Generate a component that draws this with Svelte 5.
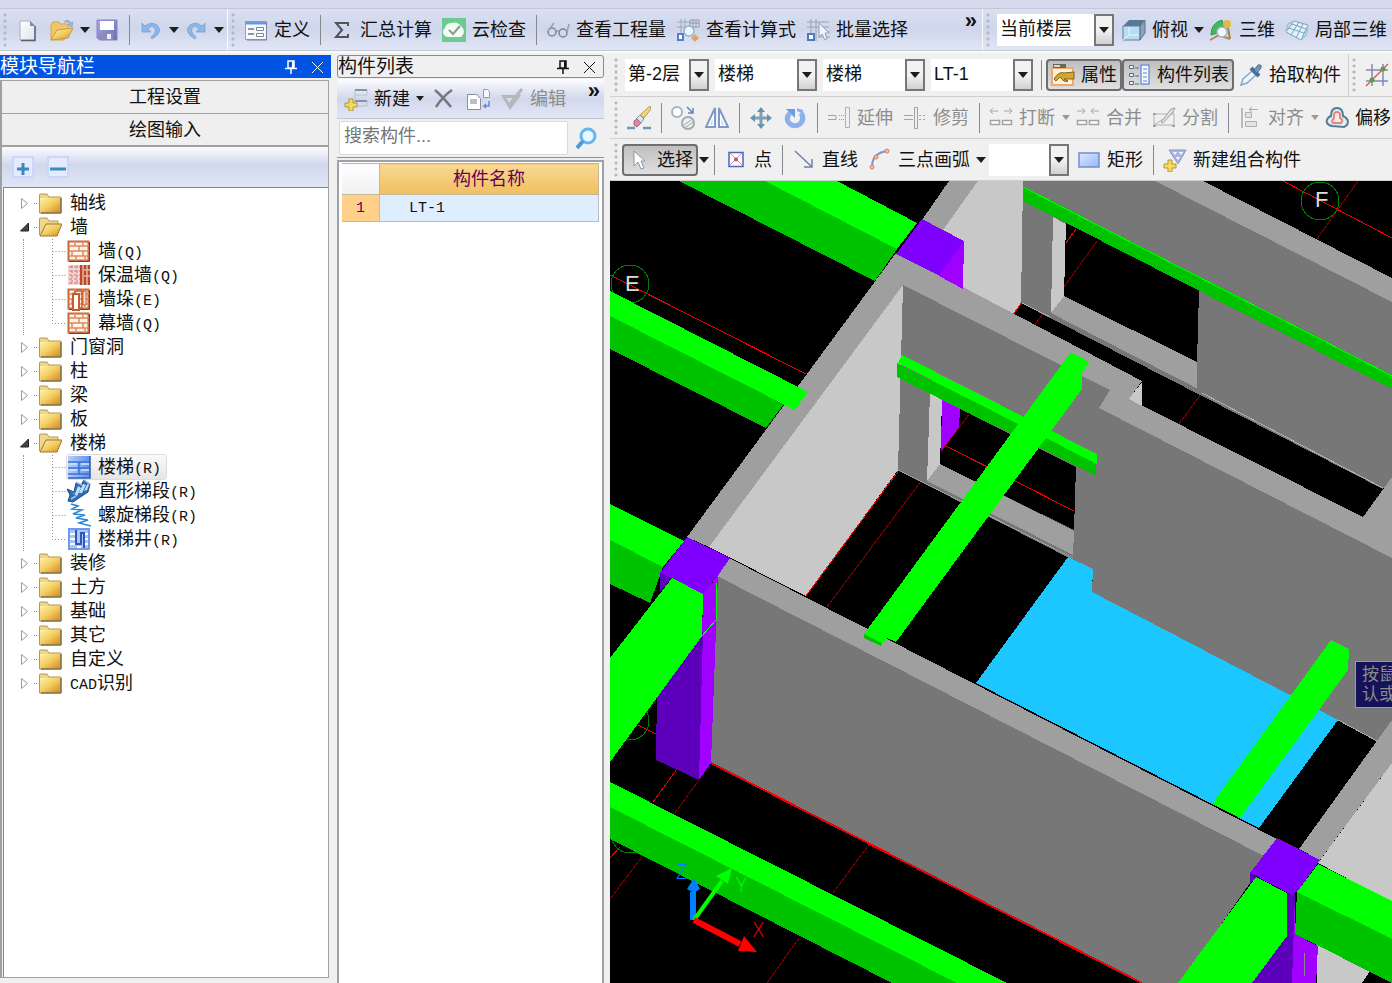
<script>
  let floor = $state('当前楼层');
  let search = $state('');
  let selected = $state('楼梯');

  let tree = $state([
    { label: '轴线' },
    { label: '墙', open: true, items: [
      { label: '墙', key: 'Q', icon: 'brick' },
      { label: '保温墙', key: 'Q', icon: 'insul' },
      { label: '墙垛', key: 'E', icon: 'pier' },
      { label: '幕墙', key: 'Q', icon: 'brick' }
    ] },
    { label: '门窗洞' },
    { label: '柱' },
    { label: '梁' },
    { label: '板' },
    { label: '楼梯', open: true, items: [
      { label: '楼梯', key: 'R', icon: 'stair' },
      { label: '直形梯段', key: 'R', icon: 'flight' },
      { label: '螺旋梯段', key: 'R', icon: 'spiral' },
      { label: '楼梯井', key: 'R', icon: 'well' }
    ] },
    { label: '装修' },
    { label: '土方' },
    { label: '基础' },
    { label: '其它' },
    { label: '自定义' },
    { label: '识别', prefix: 'CAD' }
  ]);

  const bricks = '<path d="M1.500 2.500h20v19h-20z" fill="#fff3e6" stroke="#c9683c" stroke-width="2"/><path d="M2 7h20M2 12h20M2 17h20M8 2v5M16 2v5M12 7v5M5 12v5M16 12v5M9 17v5M18 17v5" stroke="#dc8a60" stroke-width="1.500"/><path d="M22.500 3v19.500H2" stroke="#5b4a42"/>';

  const icons = {
    file: '<path d="M4 3h10l5 5v14H4z" fill="url(#paper)" stroke="#a7b0bf"/><path d="M19 8v14.500H5" stroke="#56606e" stroke-width="1.500"/><path d="M14 3v5h5z" fill="#7f8c9c"/>',
    open: '<path d="M1 7l2-3h6l1 2h8v4l-4 12H1z" fill="#f0c66c" stroke="#d8a544"/><path d="M1 22l6-10 16-2-5 10z" fill="url(#gold)" stroke="#c79c4a"/><path d="M14 4q4-4 7 1l2-1-1 5-4-2 2-1q-2-3-6-2z" fill="#9fb7cf" stroke="#7890aa" stroke-width=".5"/>',
    save: '<path d="M2 2h20v20H5l-3-2z" fill="url(#disk)" stroke="#8583c9"/><path d="M5 3h14v9H5z" fill="#fff"/><path d="M7 15h11v7H7z" fill="#8c8fa5"/><path d="M12 16h4v5h-4z" fill="#eef"/>',
    undo: '<path d="M3 5v9h9l-3-3q3-4 6-2 4 4-3 10l1 2q12-7 5-14-6-4-12 1z" fill="#8fb4ea" stroke="#6f9cdc" stroke-width=".7"/>',
    redo: '<path d="M21 5v9h-9l3-3q-3-4-6-2-4 4 3 10l-1 2q-12-7-5-14 6-4 12 1z" fill="#8cb8e6" stroke="#6b9dd8" stroke-width=".7"/>',
    define: '<path d="M1.500 3.500h21v18h-21z" fill="#f7f9ff" stroke="#93a2bb"/><path d="M1.500 3.500h21v3h-21z" fill="#6b97e2"/><path d="M4 11h6M4 16h6" stroke="#777" stroke-width="1.500"/><path d="M12.500 9.500h7v3h-7zM12.500 15.500h7v3h-7z" fill="#fff" stroke="#7b8798"/><path d="M22.500 5v17H3" stroke="#728095"/>',
    sigma: '<path d="M18 8V5H6l6 7-6 7h12v-3" stroke="#50555c" stroke-width="2"/>',
    cloud: '<path d="M0 0h24v24H0z" fill="#6ccb94"/><path d="M6 19a5 5 0 0 1-3-9q1-5 7-5 5-2 9 3 6 6 0 11z" fill="#f3fcf3"/><path d="M7 12l4 4 7-8" stroke="#8a9c92" stroke-width="2"/>',
    glasses: '<circle cx="6" cy="14" r="4" stroke="#7d858e" stroke-width="1.500"/><circle cx="17" cy="15" r="4" stroke="#7d858e" stroke-width="1.500"/><path d="M2 13L8 5M21 14l2-8M10 13h3" stroke="#9aa1a8" stroke-width="1.500"/>',
    formula: '<path d="M5 1v14M1 4h22M1 9h14M9 1v9" stroke="#a0a8b5"/><path d="M2 16h5v6H2z" fill="#fff" stroke="#567fc4" stroke-width="2"/><path d="M14 2h9v7h-9z" fill="#dfe3ea" stroke="#8c96a2"/><path d="M14 5h9M17 2v7M20 2v7" stroke="#8c96a2"/><circle cx="13" cy="13" r="5" fill="#edf7ff" stroke="#8fb5d5" stroke-width="1.500"/><path d="M19 16l4 4-4 4-4-4z" fill="#e0a566"/>',
    batch: '<path d="M5 1v14M10 1v22M1 4h22M1 9h22M12 14h12M12 19h12" stroke="#9aa1aa"/><path d="M2 16h6v6H2z" fill="#fff" stroke="#4f78c0" stroke-width="2"/><path d="M13 5v14l3-3 3 6 2-1-2-6h4z" fill="#eef4fa" stroke="#94a1b0"/>',
    cube: '<path d="M1 8l6-6h16l-5 6z" fill="#587895"/><path d="M1 8h17v14H1z" fill="#b9dcf5" stroke="#667f98"/><path d="M18 8l5-6v13l-5 7z" fill="#86a4bb" stroke="#5a7389"/><path d="M7 9v8h10M7 17l-6 5" stroke="#e8f6ff"/>',
    view3d: '<path d="M2 17Q2 5 13 2l3 11z" fill="#45b864" stroke="#319352"/><circle cx="18" cy="6" r="4" fill="#e2ba3d"/><path d="M19 10l2 11" stroke="#9a8450" stroke-width="2"/><path d="M1 22l9-5 11 4" stroke="#b8854f" stroke-width="2"/><circle cx="13" cy="14" r="5" fill="#f1f8fb" stroke="#a3b4be" stroke-width="1.500"/>',
    local3d: '<path d="M1 14L9 3l14 4-7 15z" fill="#e2f2fb" stroke="#7ba3bd"/><path d="M4 10l15 5M7 6l14 5M6 17L14 4M11 20l7-14" stroke="#7ba3bd"/><path d="M1 14l2-8 6-3M23 7l-2 10-5 5" stroke="#9bc0d4" stroke-width="1.500"/>',
    newItem: '<path d="M11 19V3h12v5H11M11 14h12v5H11" stroke="#b4c2d0"/><path d="M11 3h12M11 14h12" stroke="#8195a9" stroke-width="2"/><path d="M5 12h4v4h4v4H9v4H5v-4H1v-4h4z" fill="#f5db59" stroke="#ad953f"/>',
    cross: '<path d="M3 3q7 6 16 17M20 3Q11 9 4 20" stroke="#74787c" stroke-width="2.500"/>',
    copy: '<path d="M1.500 7.500h9l4 4v11h-13z" fill="#fff" stroke="#89909a"/><path d="M4 12h7v5H4z" fill="#b9bec7"/><path d="M17.500 2.500h4l2 2v6h-6z" fill="#f8f9ff" stroke="#9299a8"/><path d="M23 14v5h-5l2-2m-2 2 2 2" stroke="#6b8ae0" stroke-width="1.500"/>',
    check: '<path d="M1 8h20L10 23z" fill="#b4b7bb"/><path d="M6 11l4 6 5-6z" fill="#d5d9e4"/><path d="M10 17L22 2" stroke="#b4b7bb" stroke-width="3"/>',
    zoom: '<circle cx="13" cy="10" r="7" fill="#e5f7ff" stroke="#64b7ec" stroke-width="3"/><path d="M8 15l-6 7" stroke="#489bdf" stroke-width="4"/>',
    props: '<path d="M1 5h21v17H1z" fill="#fff1d6" stroke="#efa968" stroke-width="2"/><path d="M2 1h13v4H2z" fill="#6b655c"/><path d="M3 2h6v2H3z" fill="#d8d8d8"/><path d="M3 16q5-8 10-6l10-1v7H13l4 2q-4 2-8-4l-4 4z" fill="#d5a52c" stroke="#7e6326"/>',
    list: '<path d="M2.500 2.500h4v3h-4zM2.500 10.500h4v3h-4zM2.500 18.500h4v3h-4z" fill="#ecf2ff" stroke="#52688c"/><path d="M8 5h4M8 13h4M8 21h4" stroke="#52688c"/><path d="M14 2h8v19h-8z" fill="#f5f9ff" stroke="#7297d6" stroke-width="1.500"/><path d="M16 6h4M16 10h4M16 14h4M16 18h4" stroke="#5e88ce"/>',
    pick: '<path d="M2 22l2-6 9-8 4 4-9 8z" fill="#eaf7ff" stroke="#87aacb" stroke-width="1.500"/><path d="M12 5l8 8" stroke="#496f99" stroke-width="4"/><path d="M15 7l4-5q4-1 3 3l-4 5z" fill="#6b97c2" stroke="#496f99"/>',
    axis: '<path d="M7 1v22M18 1v22M1 7h22M1 18h22" stroke="#8089b5" stroke-width="1.500"/><path d="M1 23L23 1" stroke="#e05656" stroke-width="1.500"/><circle cx="7" cy="17" r="2.500" fill="#5d9b48"/><circle cx="18" cy="6" r="2.500" fill="#5d9b48"/>',
    eraser: '<path d="M0 22h8M16 22h8" stroke="#7695ae" stroke-width="2.500"/><path d="M13 9L23 0l1 3-7 9z" fill="#efd583" stroke="#b79b4d"/><path d="M9 13l4-4 4 4-4 5z" fill="#d8e4ed" stroke="#8799a6"/><path d="M7 15l3-2 4 4-4 4-3-2z" fill="#e282a2" stroke="#9b7186"/>',
    dup: '<circle cx="6" cy="6" r="5" fill="#fff" stroke="#a3b3c2" stroke-width="2"/><circle cx="17" cy="17" r="6" fill="#edf0f2" stroke="#a4a9ad" stroke-width="2"/><path d="M13 19l7-5M15 21l7-5" stroke="#9da3aa"/><path d="M16 1l6 6M22 2v5h-5" stroke="#6387ad" stroke-width="1.500"/>',
    mirror: '<path d="M10 2v19H1zM14 2v19h9z" fill="#fff" stroke="#7f98c8" stroke-width="2"/><path d="M7.500 12v7H5zM16.500 12v7H19z" fill="#c9daf5"/>',
    move: '<path d="M12 4v16M4 12h16" stroke="#7f9fb5" stroke-width="3"/><path d="M12 1l4 5H8zM12 23l4-5H8zM1 12l5-4v8zM23 12l-5-4v8z" fill="#6c90a9"/>',
    rotate: '<path d="M7 7q-5 5-1 10 5 5 11 1 5-5 1-11" stroke="#8cb0ea" stroke-width="5"/><path d="M3 3h9v9l-3-3z" fill="#6f9be2"/><path d="M14 2l6 2v4l-6-3z" fill="#8cb0ea"/>',
    extend: '<path d="M1 9.500h8v4H1M11 9.500h6M11 13.500h6" stroke="#a0a0a0"/><path d="M11 9.500h6M11 13.500h6" stroke="#f0f0f0" stroke-dasharray="1 1"/><path d="M18.500 1.500h4v20h-4z" stroke="#b0b0b0"/>',
    trim: '<path d="M1 9.500h9M1 13.500h9" stroke="#a2a2a2"/><path d="M16 9.500h8M16 13.500h8" stroke="#a2a2a2" stroke-dasharray="2 2"/><path d="M11.500 1.500h3v21h-3z" fill="#eee" stroke="#a2a2a2"/>',
    cut: '<path d="M1 5h8M4 2L1 5l3 3M15 5h8M20 2l3 3-3 3" stroke="#a5a5a5"/><path d="M1.500 14.500h9v4h-9zM13.500 14.500h9v4h-9z" fill="#fff" stroke="#a2a2a2" stroke-width="1.500"/>',
    join: '<path d="M1 5h8M6 2l3 3-3 3M15 5h8M18 2l-3 3 3 3" stroke="#a5a5a5"/><path d="M1.500 14.500h9v4h-9zM13.500 14.500h9v4h-9z" fill="#fff" stroke="#a2a2a2" stroke-width="1.500"/>',
    divide: '<path d="M2 8h20v11H2zM2 19L22 6" stroke="#b0b0b0"/><path d="M9 16L19 3l4-1-2 4-10 11z" fill="#ddd" stroke="#a2a2a2"/><path d="M1 20h3M20 20h3M1 8h3" stroke="#a2a2a2" stroke-width="2"/>',
    align: '<path d="M4 2v20" stroke="#aaa" stroke-width="1.500"/><path d="M7.500 6.500h6v5h-6zM7.500 15.500h11v5h-11z" fill="#e2e2e2" stroke="#b0b0b0"/><path d="M11 3.500h9M14 1l-3 2.500L14 6" stroke="#aaa"/>',
    offset: '<path d="M7 20q-8-2-4-8 1-1 3-2 0-8 6-8t6 8q7 3 4 9l-3 2z" fill="#e1edf3" stroke="#537b94" stroke-width="2"/><path d="M8 17q-2-2 1-5-1-6 3-6t3 6q4 2 1 5z" fill="#fbe9e7" stroke="#e28580" stroke-width="2"/>',
    pointer: '<path d="M7 3v15l4-4 3 7 3-1-3-7h4z" fill="#fff" stroke="#8799ad"/>',
    dot: '<path d="M5 4.500h14v14H5z" fill="#fff" stroke="#5a5fb0" stroke-width="1.500"/><path d="M6 5l12 12M18 5L6 17" stroke="#8fa0d0"/><circle cx="12" cy="11.500" r="2" fill="#e0475a"/>',
    line: '<path d="M3 3l16 15M20 11v8h-8" stroke="#6a83ab" stroke-width="1.500"/>',
    arc: '<path d="M4 19Q4 5 19 3" stroke="#7999c6" stroke-width="2"/><circle cx="4" cy="19" r="2" fill="#f6baa6" stroke="#db7866"/><circle cx="8" cy="9" r="2" fill="#f6baa6" stroke="#db7866"/><circle cx="19" cy="3" r="2" fill="#f6baa6" stroke="#db7866"/>',
    rect: '<path d="M2 5h20v14H2z" fill="url(#blue)" stroke="#6f8fd0" stroke-width="1.500"/>',
    group: '<path d="M6 2h17l-8 14z" fill="#a9b6dd" stroke="#8395c4"/><path d="M10 4h4l-2 3zM16 4h4l-2 3zM13 9h4l-2 3z" fill="#fff"/><path d="M5 12h4v4h4v4H9v4H5v-4H1v-4h4z" fill="#f5db59" stroke="#ad953f"/>',
    folder: '<path d="M1.500 6V4q0-1 1-1H9l2 3h12v16H1.500z" fill="#ecd58c" stroke="#b89a57"/><path d="M2 7h20v14H2z" fill="url(#gold)"/><path d="M23 7v15H3" stroke="#5c4a26"/>',
    folderOpen: '<path d="M1.500 20V4q0-1 1-1H9l2 3h9v4" fill="#f0d78c" stroke="#b89a57"/><path d="M2 21L8 9h16l-5 12z" fill="url(#gold)" stroke="#9c7632"/>',
    brick: bricks,
    insul: '<path d="M1 2h14v20H1z" fill="#f2d3cd"/><path d="M2 4h11M2 8h11M2 12h11M2 16h11M2 20h11M5 2v20M10 2v20" stroke="#c97883" stroke-dasharray="3 2"/><path d="M13 2h10v20H13z" fill="#b44a31"/><path d="M16 2v20M20 2v20M17 7h6M17 13h6" stroke="#f0b29c" stroke-width="1.500"/>',
    pier: bricks + '<path d="M6 7h6v16H6z" fill="#fff" stroke="#c85a2d" stroke-width="2"/><path d="M6 7l3-3h6v16l-3 3" stroke="#c85a2d" stroke-width="1.500"/><path d="M16 4h3v14h-3z" fill="#ffe2cc" stroke="#c85a2d"/>',
    stair: '<path d="M1 1h22v22H1z" fill="url(#stairBlue)"/><path d="M1 7h22M1 13h22M1 19h22M12 7v12" stroke="#3d6fd8" stroke-width="1.500"/><path d="M3 9h7M14 9h8M3 15h7M14 15h8" stroke="#d7e6ff" stroke-width="1.500"/><path d="M23 1v22H1" stroke="#315dae" stroke-width="1.500"/>',
    flight: '<path d="M0 10l7 3 2-9 5 2 3-5 6 4-2 8L6 23l-5-1 2-6z" fill="#2f6cb0" stroke="#174f93"/><path d="M3 12l5 3 3-8 3 2-4 8zM12 14l4-9 3 1-4 8zM17 12l4-8 1 2-2 5z" fill="#c3dff8"/><path d="M4 20l5-3M9 3l6 3M17 1l6 4" stroke="#9cc6ef" stroke-width="1.500"/>',
    spiral: '<path d="M4 1l7 2-6 3 10 1-9 4 12 1-9 3 12 2-9 3 12 3" stroke="#2a86d8" stroke-width="1.500"/>',
    well: '<path d="M2 2h20v20H2z" fill="#a9c6fb" stroke="#6f9af0" stroke-width="2"/><path d="M3 7h5M3 12h5M3 17h5M17 7h4M17 12h4M17 17h4M10 20h4" stroke="#fff" stroke-width="2"/><path d="M9 3v14h5V6h3v15" stroke="#3457b5" stroke-width="2"/>'
  };
</script>

{#snippet icon(name)}
  <svg class="icon" viewBox="0 0 24 24" fill="none" aria-hidden="true">{@html icons[name]}</svg>
{/snippet}

{#snippet tool(name, label, cls = '')}
  <button class="tool {cls}" aria-label={label || name} disabled={cls === 'off'}>
    {@render icon(name)}{#if label}<span>{label}</span>{/if}
  </button>
{/snippet}

{#snippet drop(cls = '')}
  <button class="drop {cls}" aria-label="更多"><i class="tri"></i></button>
{/snippet}

{#snippet combo(label, value, size)}
  <span class="combo {size}">
    <select aria-label={label}><option>{value}</option></select>
    <i class="comboBtn"><i class="tri"></i></i>
  </span>
{/snippet}

{#snippet windowBtns()}
  <button class="winBtn" aria-label="固定">
    <svg viewBox="0 0 14 14" width="14" height="14" fill="none" stroke="currentColor"><path d="M4 1h6v7H4zM1 8.500h12M7 9v5" stroke-width="1.500" /><path d="M9 1v7" stroke-width="2" /></svg>
  </button>
  <button class="winBtn" aria-label="关闭">
    <svg viewBox="0 0 14 14" width="14" height="14" fill="none" stroke="currentColor"><path d="M1 2l11 11M12 2L1 13" /></svg>
  </button>
{/snippet}

<svg class="defs" aria-hidden="true">
  <defs>
    <linearGradient id="gold" x2="1" y2="1"><stop stop-color="#fff2a8" /><stop offset=".5" stop-color="#f3cd62" /><stop offset="1" stop-color="#d58b1c" /></linearGradient>
    <linearGradient id="paper" x2="1" y2="1"><stop stop-color="#fff" /><stop offset="1" stop-color="#dbe4ee" /></linearGradient>
    <linearGradient id="disk" x2="1" y2="1"><stop stop-color="#a9a6e8" /><stop offset="1" stop-color="#6b6bb8" /></linearGradient>
    <linearGradient id="blue" x2="1" y2="1"><stop stop-color="#dceaff" /><stop offset="1" stop-color="#94b7f7" /></linearGradient>
    <linearGradient id="stairBlue" x2="1"><stop stop-color="#b4d0ff" /><stop offset="1" stop-color="#5f90ee" /></linearGradient>
  </defs>
</svg>

<div class="app">
  <div class="menuStrip"></div>
  <header class="mainBar">
    <div class="group">
      <i class="grip"></i>
      {@render tool('file', '')}
      {@render tool('open', '')}
      {@render drop()}
      {@render tool('save', '')}
      <i class="sep"></i>
      {@render tool('undo', '')}
      {@render drop()}
      {@render tool('redo', '')}
      {@render drop()}
    </div>
    <div class="group grow">
      <i class="grip"></i>
      {@render tool('define', '定义')}
      <i class="sep"></i>
      {@render tool('sigma', '汇总计算')}
      {@render tool('cloud', '云检查')}
      <i class="sep"></i>
      {@render tool('glasses', '查看工程量')}
      {@render tool('formula', '查看计算式')}
      {@render tool('batch', '批量选择')}
      <button class="more" aria-label="更多工具">»</button>
    </div>
    <div class="group">
      <i class="grip"></i>
      <span class="combo w117">
        <select aria-label="楼层范围" bind:value={floor}><option>当前楼层</option></select>
        <i class="comboBtn"><i class="tri"></i></i>
      </span>
      {@render tool('cube', '俯视')}
      {@render drop()}
      {@render tool('view3d', '三维')}
      {@render tool('local3d', '局部三维')}
    </div>
  </header>

  <div class="body">
    <aside class="nav">
      <div class="title active"><span>模块导航栏</span>{@render windowBtns()}</div>
      <div class="navBody">
        <button class="section">工程设置</button>
        <button class="section">绘图输入</button>
        <div class="treeBar">
          <button class="mini" aria-label="全部展开"><svg viewBox="0 0 22 22" width="22" height="22"><path d="M5 13h12M11 7v12" stroke="#388abf" stroke-width="3" /></svg></button>
          <button class="mini" aria-label="全部折叠"><svg viewBox="0 0 22 22" width="22" height="22"><path d="M3 13h16" stroke="#388abf" stroke-width="3" /></svg></button>
        </div>
        <ul class="tree">
          {#each tree as node}
            <li>
              <button class="node" onclick={() => { if (node.items) node.open = !node.open; }}>
                <svg class="twist" viewBox="0 0 19 24">
                  {#if node.open}
                    <path d="M9.500 8v8H1.500z" fill="#444" stroke="#222" />
                  {:else}
                    <path d="M2.500 7.500v10l6-5z" fill="#fff" stroke="#999" />
                  {/if}
                  <path d="M15 12.500h4" stroke="#888" stroke-dasharray="1 1" />
                </svg>
                {@render icon(node.open ? 'folderOpen' : 'folder')}
                <span class="text">{#if node.prefix}<span class="mono">{node.prefix}</span>{/if}{node.label}</span>
              </button>
              {#if node.open}
                <ul class="children">
                  {#each node.items as item, i}
                    <li>
                      <svg class="stub" viewBox="0 0 15 24"><path d={i === node.items.length - 1 ? 'M.5 0V12.5H15' : 'M.5 0V24M.5 12.5H15'} fill="none" stroke="#888" stroke-dasharray="1 2" /></svg>
                      <button class="leaf" class:selected={selected === item.label} onclick={() => (selected = item.label)}>
                        {@render icon(item.icon)}
                        <span>{item.label}<span class="mono">({item.key})</span></span>
                      </button>
                    </li>
                  {/each}
                </ul>
              {/if}
            </li>
          {/each}
        </ul>
      </div>
    </aside>

    <aside class="list">
      <div class="title"><span>构件列表</span>{@render windowBtns()}</div>
      <div class="listBar">
        <button class="tool tight">{@render icon('newItem')}<span>新建</span></button>
        {@render drop('wide')}
        {@render tool('cross', '')}
        {@render tool('copy', '')}
        {@render tool('check', '编辑', 'off')}
        <button class="more" aria-label="更多">»</button>
      </div>
      <div class="search">
        <input type="text" aria-label="搜索构件" placeholder="搜索构件..." bind:value={search} />
        <button class="tool" aria-label="搜索">{@render icon('zoom')}</button>
      </div>
      <div class="gridBox">
        <table>
          <thead><tr><th class="num" aria-label="序号"></th><th>构件名称</th></tr></thead>
          <tbody><tr><td class="num mono">1</td><td class="mono">LT-1</td></tr></tbody>
        </table>
      </div>
    </aside>

    <main class="work">
      <div class="bar">
        <i class="grip"></i>
        {@render combo('楼层', '第-2层', 'w84')}
        {@render combo('构件类别', '楼梯', 'w102')}
        {@render combo('构件类型', '楼梯', 'w102')}
        {@render combo('构件', 'LT-1', 'w102')}
        <i class="sep"></i>
        {@render tool('props', '属性', 'pressed')}
        {@render tool('list', '构件列表', 'pressed')}
        {@render tool('pick', '拾取构件')}
        <i class="edge"></i>
        <i class="grip"></i>
        {@render tool('axis', '')}
      </div>
      <div class="bar">
        <i class="grip"></i>
        {@render tool('eraser', '')}
        <i class="sep"></i>
        {@render tool('dup', '')}
        {@render tool('mirror', '')}
        <i class="sep"></i>
        {@render tool('move', '')}
        {@render tool('rotate', '')}
        <i class="sep"></i>
        {@render tool('extend', '延伸', 'off')}
        {@render tool('trim', '修剪', 'off')}
        <i class="sep"></i>
        {@render tool('cut', '打断', 'off')}
        {@render drop('dim')}
        {@render tool('join', '合并', 'off')}
        {@render tool('divide', '分割', 'off')}
        <i class="sep"></i>
        {@render tool('align', '对齐', 'off')}
        {@render drop('dim')}
        {@render tool('offset', '偏移')}
      </div>
      <div class="bar">
        <i class="grip"></i>
        {@render tool('pointer', '选择', 'pressed')}
        {@render drop()}
        <i class="sep"></i>
        {@render tool('dot', '点')}
        <i class="sep"></i>
        {@render tool('line', '直线')}
        {@render tool('arc', '三点画弧')}
        {@render drop()}
        {@render combo('弧方式', '', 'w80')}
        {@render tool('rect', '矩形')}
        <i class="sep"></i>
        {@render tool('group', '新建组合构件')}
      </div>

      <svg class="scene" viewBox="610 181 782 802" preserveAspectRatio="xMinYMin slice" shape-rendering="crispEdges" fill="none">
        <!-- axis grid -->
        <g stroke="#f00000">
          <path d="M610 275L806 374M1283 181L1392 238M677 769L653 802M620 847L610 858M638 725L656 734" />
        </g>
        <g stroke="#800000">
          <path d="M1358 181L1317 239M921 481L827 607M1043 314L1034 326M1201 394L1179 424M699 780L675 813M870 843L833 893M799 938L767 983M642 857L610 899" />
        </g>
        <g stroke="#007c00">
          <circle cx="630" cy="284" r="19" /><circle cx="1320" cy="201" r="19" /><circle cx="630" cy="721" r="19" /><circle cx="630" cy="834" r="19" />
        </g>

        <!-- left beams -->
        <path d="M679 181H765L897 249L875 281z" fill="#00c300" />
        <path d="M765 181H837L917 223L897 249z" fill="#0f0" />
        <path d="M610 316L784 404L766 428L610 349zM610 540L663 567L650 603L610 584z" fill="#00c300" />
        <path d="M610 504L684 541L663 567L610 540z" fill="#0f0" />

        <!-- far room -->
        <path d="M949 181H978L943 230L922 220z" fill="#9f9f9f" />
        <path d="M978 181H1024L1021 303L1013 315L963 290V241L943 230z" fill="#c8c8c8" />
        <path d="M1023 181H1155L1392 302V478L1383 489L1021 303z" fill="#777" />
        <path d="M1155 181H1203L1392 278V302z" fill="#9f9f9f" />
        <path d="M1053 217L1066 224L1064 296L1051 313z" fill="#c8c8c8" />
        <path d="M1066 222L1199 290L1197 362L1064 296z" fill="#000" />
        <path d="M1064 296L1197 362V389L1051 313z" fill="#9f9f9f" />
        <path d="M1050 314L1202 392" stroke="#777" stroke-width="2" />
        <path d="M1202 393L1383 488M1022 303L1050 317" stroke="#b0b0b0" />
        <path d="M1066 243L1076 229M1013 315L1022 302" stroke="#f00000" />
        <path d="M1064 287L1097 241" stroke="#800000" />
        <path d="M1023 186L1392 375V389L1023 201z" fill="#00c300" />
        <path d="M1023 187L1392 376" stroke="#0f0" />

        <!-- stair room, back walls -->
        <path d="M903 285L898 470L806 596L709 547z" fill="#c8c8c8" />
        <path d="M806 596L899 470" stroke="#f00000" />
        <path d="M896 253L910 270L903 285L709 547L687 537z" fill="#9f9f9f" />
        <path d="M903 285L1110 390L1099 408L1392 558V722L1377 741L1092 592L1093 570L1073 560L898 470z" fill="#777" />
        <path d="M896 253L940 275L1142 381L1129 399L1363 517L1392 477V558L1099 408L1110 390L903 285z" fill="#9f9f9f" />
        <path d="M1142 382V406L1129 399z" fill="#c8c8c8" />
        <path d="M930 393L942 400L940 464L927 481z" fill="#c8c8c8" />
        <path d="M942 400L1076 467L1074 530L940 464z" fill="#000" />
        <path d="M942 400L960 409L959 428L941 452z" fill="#a000ff" />
        <path d="M941 452L970 413" stroke="#800000" />
        <path d="M946 446L1074 511" stroke="#f00000" />
        <path d="M940 464L1074 531L1073 555L927 481z" fill="#9f9f9f" />
        <path d="M898 470L1073 558" stroke="#9f9f9f" />

        <!-- landing -->
        <path d="M1068 557L1093 569L1092 592L1338 720L1259 828L976 683z" fill="#1cc6ff" />
        <path d="M1338 720L1377 741" stroke="#aaa" />

        <path d="M610 291L808 392L795 410L610 316z" fill="#0f0" />
        <path d="M897 363L1096 463V476L897 377z" fill="#00c300" />
        <path d="M902 355L1097 454V464L898 363z" fill="#0f0" />

        <!-- front wall -->
        <path d="M729 558L1277 839L1264 857L717 576z" fill="#9f9f9f" />
        <path d="M717 576L1264 856L1250 873V883L1180 983H1142L711 763z" fill="#777" />
        <path d="M711 763L1142 983" stroke="#f00000" stroke-width="2" />
        <path d="M1071 352L1089 362L1082 373V389L896 642L887 638L882 643L864 634z" fill="#0f0" />
        <path d="M864 634L882 643L881 646L864 638z" fill="#00c300" />
        <path d="M1331 640L1349 649L1348 670L1240 818L1212 804z" fill="#0f0" />

        <!-- right wall and beams -->
        <path d="M1392 720L1299 849L1320 860L1392 763z" fill="#9f9f9f" />
        <path d="M1392 763L1318 863L1392 902zM1317 945L1370 971L1362 983H1317z" fill="#c8c8c8" />
        <path d="M1297 892L1392 939V983L1295 934z" fill="#00c300" />
        <path d="M1318 864L1392 901V939L1297 892z" fill="#0f0" />

        <!-- columns -->
        <path d="M922 219L964 241L940 276L896 254zM687 537L730 558L717 577L703 594L660 573zM1277 838L1320 860L1297 892L1290 894L1250 873z" fill="#8000ff" />
        <path d="M964 241L963 289L939 276zM703 594L718 576L711 763L699 780zM1295 893V934L1318 946L1316 983H1290z" fill="#a000ff" />
        <path d="M660 573L672 578L660 592zM703 630L699 780L656 760L657 690zM1250 873L1257 877L1250 883zM1286 893H1295L1292 983H1252L1286 936z" fill="#5c00bb" />
        <path d="M1304 953V976" stroke="#888" />
        <path d="M672 578L703 594L702 636L610 762V658z" fill="#0f0" />
        <path d="M1256 877L1287 893V936L1252 983H1178z" fill="#0f0" />
        <path d="M717 583L716 620L702 636" stroke="#0f0" />

        <path d="M610 807L960 983H892L610 839z" fill="#00c300" />
        <path d="M610 782L1007 983H957L610 807z" fill="#0f0" />

        <!-- coordinate axes -->
        <g shape-rendering="auto">
          <path d="M693 920V892" stroke="#0080ff" stroke-width="6" />
          <path d="M694 878L700 889L694 893L687 889z" fill="#0080ff" />
          <path d="M694 920L722 881" stroke="#0f0" stroke-width="4" />
          <path d="M732 868L716 876L728 884z" fill="#0f0" />
          <path d="M694 920L740 944" stroke="#f00" stroke-width="6" />
          <path d="M744 936L757 952L738 951z" fill="#f00" />
        </g>
        <g class="axisText">
          <text x="676" y="879" fill="#0080ff">Z</text>
          <text x="736" y="892" fill="#0f0">Y</text>
          <text x="753" y="937" fill="#f00">X</text>
        </g>
        <g class="gridText" fill="#ddd">
          <text x="625" y="291">E</text>
          <text x="1315" y="207">F</text>
        </g>

        <path d="M1355 661H1400V707H1355z" fill="#151259" stroke="#9a9aa8" />
        <g class="hintText" fill="#8b8b8b">
          <text x="1362" y="680">按鼠</text>
          <text x="1362" y="700">认或</text>
        </g>
      </svg>
    </main>
  </div>
</div>

<style>
:global(body) {
  background-color: #f0f0f0;
}
.app {
  display: flex;
  flex-direction: column;
  height: 100vh;
  overflow: hidden;
  background-color: #f0f0f0;
  color: #111;
  font-family: "Liberation Sans", "Noto Sans CJK SC", sans-serif;
  font-size: 18px;
  line-height: 24px;
}
.defs {
  position: absolute;
  width: 0;
  height: 0;
}
button, select, input {
  font: inherit;
  color: inherit;
  border: 0;
  padding: 0;
  background: none;
  border-radius: 0;
}
ul {
  list-style: none;
  margin: 0;
  padding: 0;
}
.icon {
  width: 24px;
  height: 24px;
  flex: none;
}
.menuStrip {
  height: 8px;
  flex: none;
  background-color: #d5daed;
  border-bottom: 1px solid #c3c8d8;
}
.mainBar {
  display: flex;
  flex: none;
  height: 42px;
  border-bottom: 2px solid #fafafa;
}
.group {
  display: flex;
  align-items: center;
  background: linear-gradient(#dae0f2, #cfd6eb 50%, #e1e6f6);
  border-bottom: 1px solid #c4c9d6;
}
.group:first-child {
  padding-right: 3px;
}
.group + .group {
  border-left: 1px solid #fafafa;
}
.grow {
  flex: 1;
  min-width: 0;
}
.grip {
  flex: none;
  width: 4px;
  height: 34px;
  margin: 0 4px 0 3px;
  background: radial-gradient(circle at 2px 2px, #b4b8c4 1px, transparent 2px) 0 0 / 4px 6px;
}
.sep {
  flex: none;
  width: 1px;
  height: 30px;
  margin: 0 4px 0 5px;
  background-color: #85888f;
}
.tool {
  display: flex;
  flex: none;
  align-items: center;
  gap: 6px;
  height: 32px;
  padding: 0 5px;
  box-sizing: border-box;
  white-space: nowrap;
}
.off {
  color: #8d8d8d;
}
.pressed {
  border-radius: 4px;
  background: linear-gradient(#bdbdbd, #e2e2e2);
  box-shadow: inset 0 0 0 2px #6f6f6f;
}
.drop {
  flex: none;
  display: flex;
  align-items: center;
  justify-content: center;
  width: 11px;
  height: 32px;
}
.wide {
  width: 14px;
}
.tri {
  border: 5px solid transparent;
  border-top: 6px solid #1d1d1d;
  border-bottom: 0;
}
.dim .tri, .listBar .tri {
  border-width: 5px 4px 0;
}
.dim .tri {
  border-top-color: #999;
}
.more {
  align-self: flex-start;
  margin-left: auto;
  padding: 0 5px;
  font-family: "Liberation Sans", sans-serif;
  font-weight: bold;
  font-size: 22px;
}
.combo {
  position: relative;
  flex: none;
  height: 32px;
  margin: 0 3px;
  background-color: #fff;
}
.combo select {
  appearance: none;
  width: 100%;
  height: 30px;
  padding: 0 20px 0 3px;
}
.w117 { width: 117px; }
.w84 { width: 84px; }
.w102 { width: 102px; }
.w80 { width: 80px; }
.comboBtn {
  position: absolute;
  top: 0;
  right: 0;
  bottom: 0;
  width: 16px;
  display: flex;
  align-items: center;
  justify-content: center;
  border: 2px solid #767676;
  background: linear-gradient(#f2f2f2 50%, #d0d0d0);
  pointer-events: none;
}
.body {
  flex: 1;
  min-height: 0;
  display: grid;
  grid-template-columns: 331px 267px minmax(0, 1fr);
  grid-template-rows: minmax(0, 1fr);
  column-gap: 6px;
  background-color: #f0f0f0;
}
.nav, .list, .work {
  display: flex;
  flex-direction: column;
  min-height: 0;
}
.nav, .list {
  padding-top: 2px;
}
.title {
  display: flex;
  flex: none;
  align-items: center;
  height: 23px;
  box-sizing: border-box;
  border: 1px solid #8a8a8a;
  border-radius: 3px;
  font-size: 19px;
  line-height: 20px;
}
.title span {
  flex: 1;
}
.title.active {
  border: 0;
  border-radius: 0;
  background-color: #0054e3;
  color: #fff;
}
.winBtn {
  display: flex;
  margin-right: 6px;
  margin-left: 7px;
}
.navBody {
  display: flex;
  flex: 1;
  flex-direction: column;
  min-height: 0;
  margin: 2px 2px 5px 0;
  border: 1px solid #a0a0a0;
  border-left-width: 2px;
}
.section {
  flex: none;
  height: 33px;
  background-color: #efefef;
  border-bottom: 1px solid #a0a0a0;
}
.section + .section {
  border-bottom-width: 2px;
}
.treeBar {
  display: flex;
  flex: none;
  align-items: center;
  gap: 13px;
  height: 40px;
  padding-left: 10px;
  background: linear-gradient(#fafbff, #d2d8ec 45%, #e0e5f5);
}
.mini {
  display: flex;
  background-color: #e4ebfd;
  box-shadow: inset 0 0 0 2px #cbd6f8;
}
.tree {
  flex: 1;
  overflow: hidden;
  margin-left: 1px;
  padding-top: 3px;
  background-color: #fff;
  border-top: 1px solid #82868f;
  border-left: 1px solid #82868f;
}
.node {
  display: flex;
  align-items: center;
  height: 24px;
  padding-left: 15px;
}
.twist {
  width: 19px;
  height: 24px;
}
.text {
  margin-left: 8px;
}
.mono {
  font-family: "Liberation Mono", monospace;
  font-size: 15px;
  line-height: 1;
}
.children {
  margin-left: 19px;
  border-left: 1px dotted #999;
}
.children li {
  display: flex;
  height: 24px;
  padding-left: 28px;
}
.stub {
  width: 15px;
  height: 24px;
}
.leaf {
  display: flex;
  align-items: center;
  gap: 7px;
  height: 24px;
  padding-right: 5px;
}
.selected {
  border-radius: 3px;
  background: linear-gradient(#fafafa, #e5e5e5);
  box-shadow: 0 0 0 1px #dcdcdc;
}
.listBar {
  display: flex;
  flex: none;
  align-items: center;
  height: 40px;
  margin-top: 1px;
  padding-left: 2px;
  background: linear-gradient(#fdfdff, #d2d8ec 50%, #e1e6f6);
  border-bottom: 1px solid #c0c4d0;
  box-sizing: border-box;
}
.listBar .more {
  padding: 0 4px;
}
.listBar .tight {
  padding-right: 3px;
}
.search {
  display: flex;
  flex: none;
  align-items: center;
  gap: 2px;
  height: 38px;
  border-bottom: 1px solid #8f8f8f;
}
.search input {
  flex: 1;
  min-width: 0;
  height: 34px;
  margin-left: 2px;
  padding: 0 4px 4px;
  box-sizing: border-box;
  background-color: #fff;
  border: 1px solid #dadada;
  border-radius: 2px;
}
.search input::placeholder {
  color: #777;
  opacity: 1;
}
.gridBox {
  flex: 1;
  margin-top: 2px;
  padding: 1px 3px;
  background-color: #fff;
  border: 2px solid #a0a0a8;
  border-bottom: 0;
}
table {
  width: 100%;
  border-collapse: collapse;
}
th {
  height: 30px;
  padding: 0;
  font-weight: normal;
  color: #660058;
  background: linear-gradient(#f8d894, #f1bf60);
  border: 1px solid #c5b896;
}
th.num {
  width: 37px;
  background: linear-gradient(#fff, #f0f0f0);
  border-left: 0;
}
td {
  height: 26px;
  padding: 0 0 0 29px;
  background-color: #dfeeff;
  border: 1px solid #b8bcc4;
}
td.num {
  padding: 0;
  text-align: center;
  color: #660058;
  background-color: #ffd08a;
  border-left: 0;
}
.bar {
  display: flex;
  flex: none;
  align-items: center;
  height: 42px;
  box-sizing: border-box;
  overflow: hidden;
  padding-left: 1px;
  background-color: #f0f0f0;
  border-bottom: 1px solid #cfcfcf;
}
.bar:first-child {
  height: 44px;
}
.edge {
  width: 1px;
  height: 42px;
  margin-left: 2px;
  flex: none;
  background-color: #cfcfcf;
}
.scene {
  display: block;
  flex: 1;
  min-height: 0;
  width: 100%;
  background-color: #000;
}
.axisText {
  font-family: "Open Sans", sans-serif;
  font-weight: 300;
  font-size: 20px;
}
.gridText {
  font-family: "Liberation Sans", sans-serif;
  font-size: 22px;
}
.hintText {
  font-family: "Noto Sans CJK SC", sans-serif;
  font-size: 17px;
}
</style>
